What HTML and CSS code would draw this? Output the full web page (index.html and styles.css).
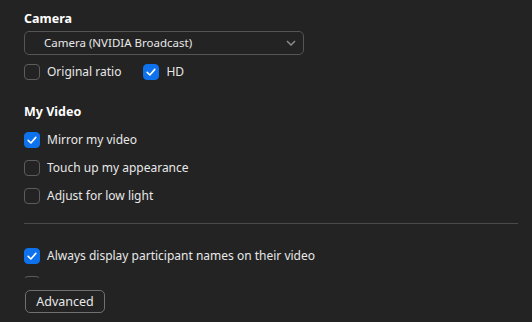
FILE: index.html
```html
<!DOCTYPE html>
<html lang="en">
<head>
  <meta charset="UTF-8" />
  <title>Video Settings</title>
  <link rel="stylesheet" href="styles.css">
</head>
<body>

  <div class="scroll-area">
    <h3 class="section-title">Camera</h3>
    <div class="select">
      <span class="select-value">Camera (NVIDIA Broadcast)</span>
      <svg class="chevron" width="10" height="6" viewBox="0 0 10 6">
        <path d="M1 1 L5 5 L9 1" fill="none" stroke="#8a8a8a" stroke-width="1.5" />
      </svg>
    </div>

    <div class="inline-options">
      <label class="option">
        <span class="box"></span>
        Original ratio
      </label>
      <label class="option">
        <span class="box checked">
          <svg width="16" height="16" viewBox="0 0 16 16"><path d="M4.2 8.4 L6.9 11 L11.8 5.4" fill="none" stroke="#fff" stroke-width="1.6" stroke-linecap="round" stroke-linejoin="round" /></svg>
        </span>
        HD
      </label>
    </div>

    <h3 class="section-title my-video">My Video</h3>
    <div class="options">
      <label class="option">
        <span class="box checked">
          <svg width="16" height="16" viewBox="0 0 16 16"><path d="M4.2 8.4 L6.9 11 L11.8 5.4" fill="none" stroke="#fff" stroke-width="1.6" stroke-linecap="round" stroke-linejoin="round" /></svg>
        </span>
        Mirror my video
      </label>
      <label class="option">
        <span class="box"></span>
        Touch up my appearance
      </label>
      <label class="option">
        <span class="box"></span>
        Adjust for low light
      </label>
    </div>

    <div class="divider"></div>

    <div class="options">
      <label class="option">
        <span class="box checked">
          <svg width="16" height="16" viewBox="0 0 16 16"><path d="M4.2 8.4 L6.9 11 L11.8 5.4" fill="none" stroke="#fff" stroke-width="1.6" stroke-linecap="round" stroke-linejoin="round" /></svg>
        </span>
        Always display participant names on their video
      </label>
      <!-- next row is scrolled out of view, only its box edge shows -->
      <label class="option">
        <span class="box"></span>
      </label>
    </div>
  </div>

  <div class="footer">
    <button class="btn">Advanced</button>
  </div>

</body>
</html>
```

FILE: styles.css
```css
html, body {
  margin: 0;
  padding: 0;
  background-color: #232323;
  color: #e8e8e8;
  font-family: "Noto Sans", "Open Sans", sans-serif;
  font-size: 12px;
}

.scroll-area {
  height: 278px;
  overflow: hidden;
  padding: 10px 14px 0 24px;
  box-sizing: border-box;
}

.section-title {
  margin: 0;
  font-size: 12.5px;
  font-weight: bold;
  line-height: 18px;
  color: #ffffff;
}

.select {
  margin-top: 3px;
  width: 280px;
  height: 24px;
  box-sizing: border-box;
  border: 1px solid #555555;
  border-radius: 5px;
  display: flex;
  align-items: center;
  justify-content: space-between;
  padding: 0 7px 0 19px;
}

.select-value {
  line-height: 18px;
  font-size: 11.5px;
}

.inline-options {
  margin-top: 9px;
  display: flex;
  gap: 22px;
}

.my-video {
  margin-top: 23px;
}

.options {
  margin-top: 11px;
  display: flex;
  flex-direction: column;
  gap: 12px;
}

.option {
  display: flex;
  align-items: center;
  gap: 7px;
  height: 16px;
  line-height: 16px;
  white-space: nowrap;
}

.box {
  width: 16px;
  height: 16px;
  box-sizing: border-box;
  border: 1px solid #5c5c5c;
  border-radius: 4px;
  flex-shrink: 0;
  display: flex;
}

.box.checked {
  background-color: #0e72ed;
  border-color: #0e72ed;
}

.box.checked svg {
  margin: -1px;
}

.divider {
  margin: 19px 0 0 0;
  height: 1px;
  background-color: #4a4a4a;
}

.divider + .options {
  margin-top: 24px;
}

.footer {
  padding: 12px 0 0 25px;
}

.btn {
  width: 80px;
  height: 23px;
  background-color: transparent;
  color: #e8e8e8;
  border: 1px solid #707070;
  border-radius: 5px;
  font-family: inherit;
  font-size: 12.5px;
  padding: 0;
}
```
